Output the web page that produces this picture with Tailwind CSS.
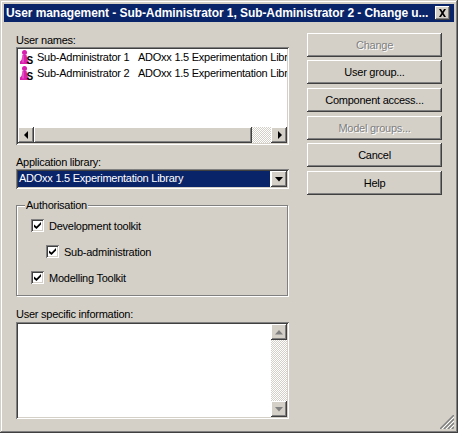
<!DOCTYPE html>
<html lang="en">
<head>
    <meta charset="UTF-8">
    <title>User management</title>
    <script src="https://cdn.jsdelivr.net/npm/@tailwindcss/browser@4"></script>
</head>
<body class="bg-[#d4d0c8]">
    <div class="w-[458px] h-[433px] relative overflow-hidden flex flex-col p-[4px] bg-[#d4d0c8] text-black font-['Liberation_Sans',sans-serif] text-[11px] tracking-[-0.25px] leading-[14px] shadow-[inset_-1px_-1px_0_#404040,inset_1px_1px_0_#d4d0c8,inset_-2px_-2px_0_#808080,inset_2px_2px_0_#fff]">
        <!-- Title bar -->
        <div class="h-[18px] shrink-0 flex items-center justify-between bg-[#0a246a] pl-[2px] pr-[4px]">
            <span class="text-white font-bold text-[12px] tracking-[-0.07px] whitespace-nowrap">User management - Sub-Administrator 1, Sub-Administrator 2 - Change u...</span>
            <div class="w-[15px] h-[14px] shrink-0 flex items-center justify-center bg-[#d4d0c8] shadow-[inset_-1px_-1px_0_#404040,inset_1px_1px_0_#fff,inset_-2px_-2px_0_#808080]">
                <svg width="9" height="8" viewBox="0 0 9 8"><path d="M1 0h2l1.500 2.500L6 0h2L5.500 4 8 8H6L4.500 5.500 3 8H1l2.500-4z" fill="#000"/></svg>
            </div>
        </div>

        <div class="flex pl-[12px] pt-[11px]">
            <!-- Left column -->
            <div class="w-[273px] flex flex-col">
                <div class="h-[14px]">User names:</div>
                <div class="h-[98px] relative bg-white overflow-hidden shadow-[inset_1px_1px_0_#808080,inset_-1px_-1px_0_#fff,inset_2px_2px_0_#404040,inset_-2px_-2px_0_#d4d0c8]">
                    <div class="pt-[2px] pl-[4px] pr-[2px] flex flex-col overflow-hidden whitespace-nowrap">
                        <div class="h-[16px] flex items-center overflow-hidden">
                            <svg class="shrink-0 overflow-visible" width="13" height="14" viewBox="0 0 13 14"><circle cx="4.500" cy="2.500" r="2.500" fill="#d81fb0"/><path d="M2.500 5h4l1 5 1 1.500V14H0v-2.500L1.500 10z" fill="#d81fb0"/><path d="M2.500 5.500h1v7h-1z" fill="#f07ad8"/><text x="6.500" y="13.500" font-family="Liberation Sans" font-weight="700" font-size="10" fill="#000">S</text></svg>
                            <span class="ml-[4px] w-[101px] shrink-0">Sub-Administrator 1</span>
                            <span>ADOxx 1.5 Experimentation Library</span>
                        </div>
                        <div class="h-[16px] flex items-center overflow-hidden">
                            <svg class="shrink-0 overflow-visible" width="13" height="14" viewBox="0 0 13 14"><circle cx="4.500" cy="2.500" r="2.500" fill="#d81fb0"/><path d="M2.500 5h4l1 5 1 1.500V14H0v-2.500L1.500 10z" fill="#d81fb0"/><path d="M2.500 5.500h1v7h-1z" fill="#f07ad8"/><text x="6.500" y="13.500" font-family="Liberation Sans" font-weight="700" font-size="10" fill="#000">S</text></svg>
                            <span class="ml-[4px] w-[101px] shrink-0">Sub-Administrator 2</span>
                            <span>ADOxx 1.5 Experimentation Library</span>
                        </div>
                    </div>
                    <!-- Horizontal scrollbar -->
                    <div class="absolute left-[2px] right-[2px] bottom-[2px] h-[16px] flex bg-[repeating-conic-gradient(#fff_0_25%,#d4d0c8_0_50%)] bg-[length:2px_2px]">
                        <div class="w-[16px] flex items-center justify-center bg-[#d4d0c8] shadow-[inset_-1px_-1px_0_#404040,inset_1px_1px_0_#fff,inset_-2px_-2px_0_#808080]">
                            <svg width="5" height="8" viewBox="0 0 5 8"><path d="M4 0v8L0 4z" fill="#000"/></svg>
                        </div>
                        <div class="w-[218px] bg-[#d4d0c8] shadow-[inset_-1px_-1px_0_#404040,inset_1px_1px_0_#fff,inset_-2px_-2px_0_#808080]"></div>
                        <div class="ml-auto w-[16px] flex items-center justify-center bg-[#d4d0c8] shadow-[inset_-1px_-1px_0_#404040,inset_1px_1px_0_#fff,inset_-2px_-2px_0_#808080]">
                            <svg width="5" height="8" viewBox="0 0 5 8"><path d="M1 0v8l4-4z" fill="#000"/></svg>
                        </div>
                    </div>
                </div>

                <div class="h-[14px] mt-[10px]">Application library:</div>
                <div class="h-[20px] flex p-[2px] bg-white shadow-[inset_1px_1px_0_#808080,inset_-1px_-1px_0_#fff,inset_2px_2px_0_#404040,inset_-2px_-2px_0_#d4d0c8]">
                    <div class="flex-1 mr-[1px] bg-[#0a246a] text-white pl-[1px] leading-[15px]">ADOxx 1.5 Experimentation Library</div>
                    <div class="w-[16px] flex items-center justify-center bg-[#d4d0c8] shadow-[inset_-1px_-1px_0_#404040,inset_1px_1px_0_#fff,inset_-2px_-2px_0_#808080]">
                        <svg width="8" height="5" viewBox="0 0 8 5"><path d="M0 0h8L4 4.500z" fill="#000"/></svg>
                    </div>
                </div>

                <!-- Authorisation group -->
                <div class="h-[91px] mt-[16px] w-[272px] relative border border-[#808080] shadow-[1px_1px_0_#fff,inset_1px_1px_0_#fff] pl-[14px] pt-[13px] flex flex-col">
                    <span class="absolute left-[8px] -top-[8px] bg-[#d4d0c8] px-[1px]">Authorisation</span>
                    <label class="h-[13px] flex items-center">
                        <span class="w-[13px] h-[13px] flex items-center justify-center bg-white shadow-[inset_1px_1px_0_#808080,inset_-1px_-1px_0_#fff,inset_2px_2px_0_#404040,inset_-2px_-2px_0_#d4d0c8]"><svg width="7" height="7" viewBox="0 0 7 7"><path d="M0 2.500v2.500l2.500 2L7 2.500V0L2.500 4.500z" fill="#000"/></svg></span>
                        <span class="ml-[5px]">Development toolkit</span>
                    </label>
                    <label class="h-[13px] mt-[13px] ml-[15px] flex items-center">
                        <span class="w-[13px] h-[13px] flex items-center justify-center bg-white shadow-[inset_1px_1px_0_#808080,inset_-1px_-1px_0_#fff,inset_2px_2px_0_#404040,inset_-2px_-2px_0_#d4d0c8]"><svg width="7" height="7" viewBox="0 0 7 7"><path d="M0 2.500v2.500l2.500 2L7 2.500V0L2.500 4.500z" fill="#000"/></svg></span>
                        <span class="ml-[5px]">Sub-administration</span>
                    </label>
                    <label class="h-[13px] mt-[13px] flex items-center">
                        <span class="w-[13px] h-[13px] flex items-center justify-center bg-white shadow-[inset_1px_1px_0_#808080,inset_-1px_-1px_0_#fff,inset_2px_2px_0_#404040,inset_-2px_-2px_0_#d4d0c8]"><svg width="7" height="7" viewBox="0 0 7 7"><path d="M0 2.500v2.500l2.500 2L7 2.500V0L2.500 4.500z" fill="#000"/></svg></span>
                        <span class="ml-[5px]">Modelling Toolkit</span>
                    </label>
                </div>

                <div class="h-[14px] mt-[11px] mb-[1px]">User specific information:</div>
                <div class="h-[97px] flex justify-end p-[2px] bg-white shadow-[inset_1px_1px_0_#808080,inset_-1px_-1px_0_#fff,inset_2px_2px_0_#404040,inset_-2px_-2px_0_#d4d0c8]">
                    <div class="w-[16px] flex flex-col justify-between bg-[repeating-conic-gradient(#fff_0_25%,#d4d0c8_0_50%)] bg-[length:2px_2px]">
                        <div class="h-[16px] flex items-center justify-center bg-[#d4d0c8] shadow-[inset_-1px_-1px_0_#404040,inset_1px_1px_0_#fff,inset_-2px_-2px_0_#808080]">
                            <svg width="8" height="5" viewBox="0 0 8 5"><path d="M0 4.500h8L4 0z" fill="#808080"/></svg>
                        </div>
                        <div class="h-[16px] flex items-center justify-center bg-[#d4d0c8] shadow-[inset_-1px_-1px_0_#404040,inset_1px_1px_0_#fff,inset_-2px_-2px_0_#808080]">
                            <svg width="8" height="5" viewBox="0 0 8 5"><path d="M0 0h8L4 4.500z" fill="#808080"/></svg>
                        </div>
                    </div>
                </div>
            </div>

            <!-- Buttons -->
            <div class="w-[135px] ml-[18px] flex flex-col">
                <button class="h-[24px] text-[#808080] [text-shadow:1px_1px_0_#fff] bg-[#d4d0c8] shadow-[inset_-1px_-1px_0_#404040,inset_1px_1px_0_#fff,inset_-2px_-2px_0_#808080]">Change</button>
                <button class="h-[24px] mt-[3px] bg-[#d4d0c8] shadow-[inset_-1px_-1px_0_#404040,inset_1px_1px_0_#fff,inset_-2px_-2px_0_#808080]">User group...</button>
                <button class="h-[24px] mt-[4px] bg-[#d4d0c8] shadow-[inset_-1px_-1px_0_#404040,inset_1px_1px_0_#fff,inset_-2px_-2px_0_#808080]">Component access...</button>
                <button class="h-[24px] mt-[4px] text-[#808080] [text-shadow:1px_1px_0_#fff] bg-[#d4d0c8] shadow-[inset_-1px_-1px_0_#404040,inset_1px_1px_0_#fff,inset_-2px_-2px_0_#808080]">Model groups...</button>
                <button class="h-[24px] mt-[3px] bg-[#d4d0c8] shadow-[inset_-1px_-1px_0_#404040,inset_1px_1px_0_#fff,inset_-2px_-2px_0_#808080]">Cancel</button>
                <button class="h-[24px] mt-[4px] bg-[#d4d0c8] shadow-[inset_-1px_-1px_0_#404040,inset_1px_1px_0_#fff,inset_-2px_-2px_0_#808080]">Help</button>
            </div>
        </div>

        <!-- Resize grip -->
        <svg class="absolute right-[4px] bottom-[4px]" width="14" height="14" viewBox="0 0 14 14" fill="none"><path d="M0 14L14 0M4 14L14 4M8 14l6-6M12 14l2-2" stroke="#808080" stroke-width="1.500"/><path d="M2 14L14 2M6 14l8-8M10 14l4-4" stroke="#fff" stroke-width="1"/></svg>
    </div>
</body>
</html>
